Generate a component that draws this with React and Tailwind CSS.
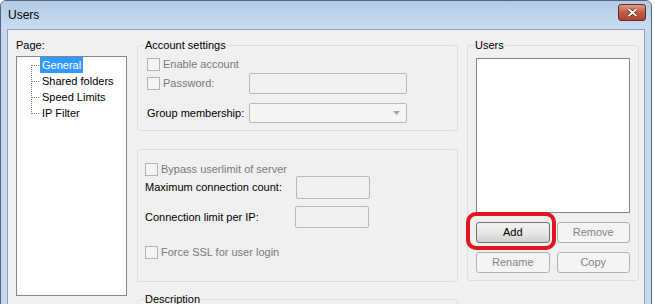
import React from 'react';

const font = "font-['Liberation_Sans',Arial,sans-serif]";

function Check({ label, className = '' }) {
    return (
        <label className={`flex items-center gap-[3px] text-[#7a7a7a] ${className}`}>
            <span className="w-[13px] h-[13px] border border-[#b3b3b3] bg-[#f4f4f4]" />
            <span>{label}</span>
        </label>
    );
}

function Field({ className = '' }) {
    return <div className={`border border-[#b8b8b8] rounded-[2px] bg-[#f0f0f0] ${className}`} />;
}

function Group({ title, className = '', bodyClass = '', children }) {
    return (
        <div className={`border border-[#d5dfe5] rounded-[3px] flex flex-col ${className}`}>
            {title && (
                <span className="-mt-[8px] ml-[6px] px-[1px] w-fit h-[14px] leading-[14px] bg-[#f0f0f0] text-black">
                    {title}
                </span>
            )}
            <div className={`flex flex-col ${bodyClass}`}>{children}</div>
        </div>
    );
}

function Button({ children, enabled = false }) {
    return enabled ? (
        <button className="h-[21px] rounded-[3px] border border-[#707070] bg-gradient-to-b from-[#f2f2f2] via-[#e8e8e8] to-[#cfcfcf] text-black">
            {children}
        </button>
    ) : (
        <button className="h-[21px] rounded-[3px] border border-[#adb2b5] bg-[#f4f4f4] text-[#838383]">
            {children}
        </button>
    );
}

const pages = ['General', 'Shared folders', 'Speed Limits', 'IP Filter'];

export default function App() {
    return (
        <div className={`w-[655px] h-[304px] overflow-hidden bg-white text-[11px] ${font}`}>
            <div className="w-[652px] h-[330px] rounded-t-[6px] border border-[#56667a] bg-[#c6d9ef] flex flex-col">
                {/* title bar */}
                <div className="h-[28px] shrink-0 flex items-center justify-between pl-[7px] pr-[5px] rounded-t-[5px] bg-gradient-to-b from-[#b3cbe6] to-[#c9dcf1]">
                    <span className="text-[12px] text-black">Users</span>
                    <button className="mt-[-5px] w-[28px] h-[17px] rounded-[3px] border border-[#6b2a22] bg-gradient-to-b from-[#dc9a8c] via-[#c25a47] to-[#ad4330] flex items-center justify-center">
                        <svg width="11" height="9" viewBox="0 0 11 9">
                            <path d="M1.5 1 L9.5 8 M9.5 1 L1.5 8" stroke="#5b1a10" strokeWidth="3.2" />
                            <path d="M1.5 1 L9.5 8 M9.5 1 L1.5 8" stroke="#ffffff" strokeWidth="1.8" />
                        </svg>
                    </button>
                </div>
                {/* client */}
                <div className="flex-1 mx-[6px] border border-[#8ea3bd] border-b-0 bg-[#f0f0f0] flex pl-[8px] pt-[8px]">
                    {/* page tree */}
                    <div className="w-[111px] flex flex-col">
                        <span className="h-[14px] leading-[14px] text-black">Page:</span>
                        <div className="mt-[4px] h-[240px] border border-[#828790] bg-white flex pl-[14px]">
                            <svg width="9" height="64" viewBox="0 0 9 64" className="shrink-0">
                                <g stroke="#7f7f7f" strokeWidth="1" strokeDasharray="1 1">
                                    <line x1="0.5" y1="8" x2="0.5" y2="57" />
                                    <line x1="1" y1="8.5" x2="9" y2="8.5" />
                                    <line x1="1" y1="24.5" x2="9" y2="24.5" />
                                    <line x1="1" y1="40.5" x2="9" y2="40.5" />
                                    <line x1="1" y1="56.5" x2="9" y2="56.5" />
                                </g>
                            </svg>
                            <div className="flex flex-col">
                                {pages.map((p, i) => (
                                    <span
                                        key={p}
                                        className={`h-[16px] leading-[16px] px-[2px] w-fit ${i === 0 ? 'bg-[#3399ff] text-white' : 'text-black'}`}
                                    >
                                        {p}
                                    </span>
                                ))}
                            </div>
                        </div>
                    </div>

                    {/* middle */}
                    <div className="ml-[10px] w-[321px] flex flex-col pt-[7px]">
                        <Group title="Account settings" className="h-[86px]" bodyClass="pl-[9px]">
                            <Check label="Enable account" className="mt-[5px] h-[14px]" />
                            <div className="mt-[2px] h-[21px] flex items-center">
                                <Check label="Password:" className="w-[102px]" />
                                <Field className="w-[158px] h-[21px]" />
                            </div>
                            <div className="mt-[9px] h-[20px] flex items-center">
                                <span className="w-[102px] text-black">Group membership:</span>
                                <div className="w-[158px] h-[20px] border border-[#b8b8b8] rounded-[2px] bg-[#f4f4f4] flex items-center justify-end pr-[6px]">
                                    <svg width="7" height="4" viewBox="0 0 7 4">
                                        <path d="M0 0 L7 0 L3.5 4 Z" fill="#a0a0a0" />
                                    </svg>
                                </div>
                            </div>
                        </Group>

                        <Group className="mt-[18px] h-[133px]" bodyClass="pl-[7px]">
                            <Check label="Bypass userlimit of server" className="mt-[12px] h-[14px]" />
                            <div className="h-[22px] flex items-center">
                                <span className="w-[151px] text-black">Maximum connection count:</span>
                                <Field className="w-[74px] h-[23px]" />
                            </div>
                            <div className="mt-[8px] h-[22px] flex items-center">
                                <span className="w-[150px] text-black">Connection limit per IP:</span>
                                <Field className="w-[74px] h-[22px]" />
                            </div>
                            <Check label="Force SSL for user login" className="mt-[17px] h-[14px]" />
                        </Group>

                        <Group title="Description" className="mt-[17px] h-[40px]" />
                    </div>

                    {/* users */}
                    <div className="ml-[9px] w-[172px] flex flex-col pt-[7px]">
                        <Group title="Users" className="h-[236px]" bodyClass="px-[8px]">
                            <div className="mt-[6px] h-[155px] border border-[#828790] bg-white" />
                            <div className="mt-[9px] grid grid-cols-2 gap-x-[7px] gap-y-[9px]">
                                <div className="relative flex flex-col">
                                    <Button enabled>Add</Button>
                                    <div className="absolute -left-[10px] -top-[10px] w-[90px] h-[38px] rounded-[10px] border-[4px] border-[#e2141e]" />
                                </div>
                                <Button>Remove</Button>
                                <Button>Rename</Button>
                                <Button>Copy</Button>
                            </div>
                        </Group>
                    </div>
                </div>
            </div>
        </div>
    );
}
